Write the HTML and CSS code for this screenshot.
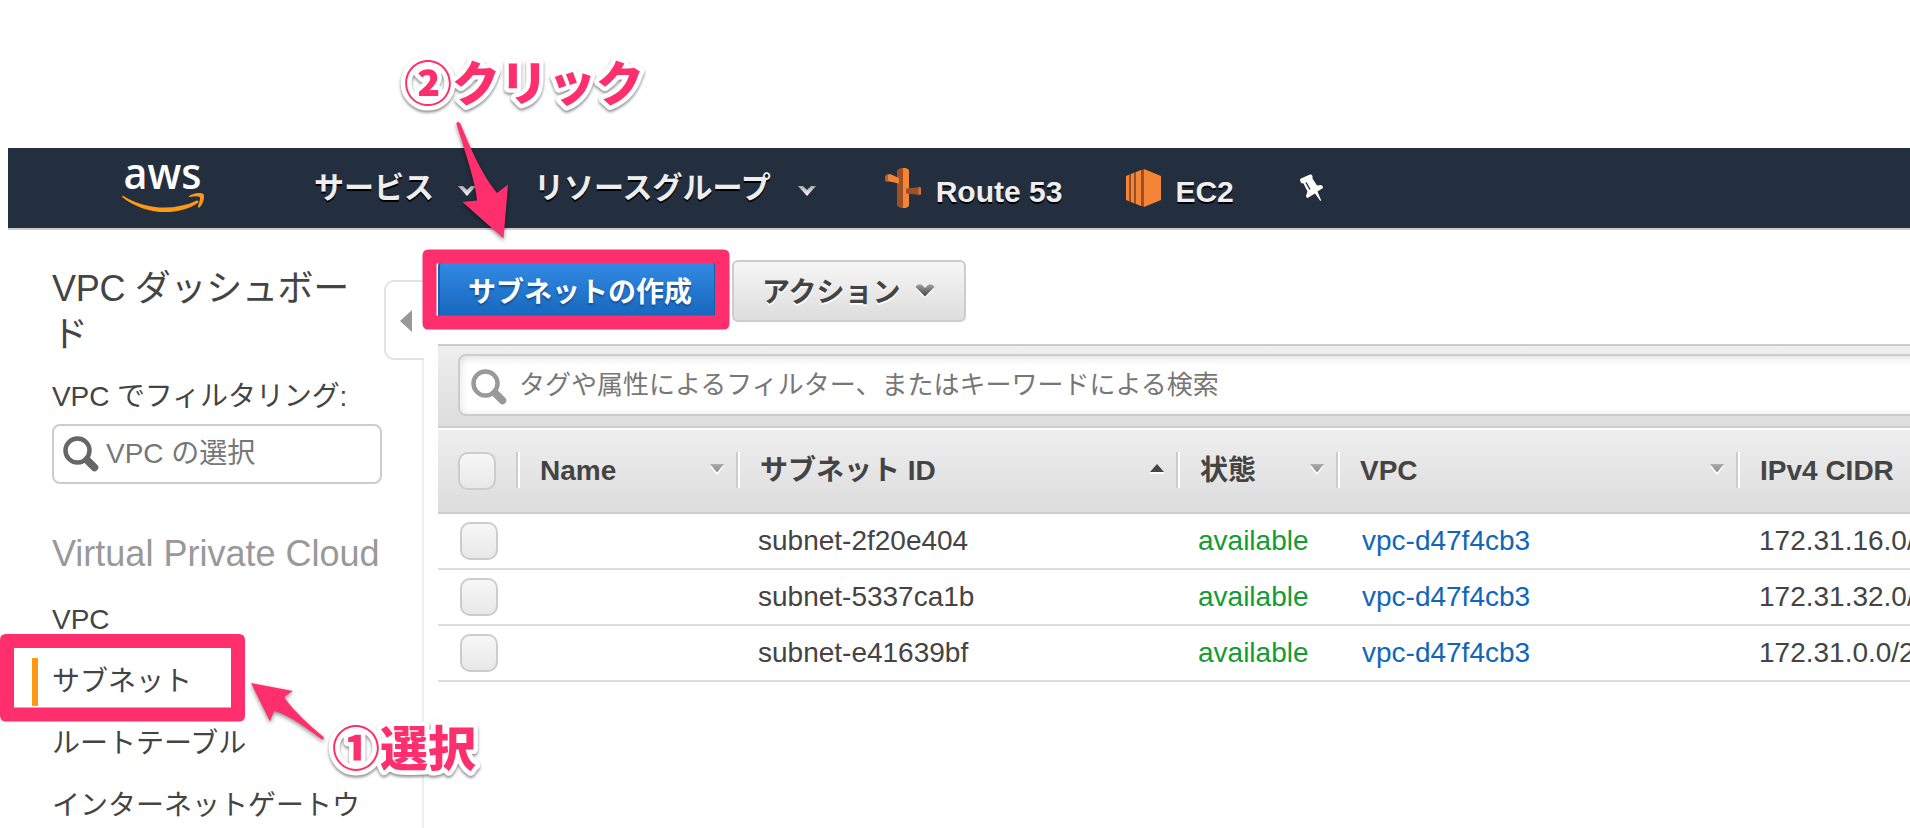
FILE: index.html
```html
<!DOCTYPE html>
<html lang="ja">
<head>
<meta charset="utf-8">
<title>VPC ダッシュボード</title>
<link rel="stylesheet" href="styles.css">
</head>
<body>
<svg class="defs" width="0" height="0">
  <defs>
    <linearGradient id="chev" x1="0" y1="0" x2="0" y2="1"><stop offset="0" stop-color="#a8a8a8"/><stop offset="1" stop-color="#fff"/></linearGradient>
    <linearGradient id="act" x1="0" y1="0" x2="0" y2="1"><stop offset="0" stop-color="#a0a0a0"/><stop offset="1" stop-color="#444"/></linearGradient>
    <linearGradient id="sort" x1="0" y1="0" x2="0" y2="1"><stop offset="0" stop-color="#adadad"/><stop offset="1" stop-color="#8a8a8a"/></linearGradient>
    <symbol id="down" viewBox="0 0 16 12"><path d="M1 2h14L8 11z" fill="#fff"/><path d="M1 0h14L8 8.500z" fill="url(#sort)"/></symbol>
    <symbol id="glass" viewBox="0 0 36 36"><circle cx="14.500" cy="14.500" r="12" fill="#fff" stroke="currentColor" stroke-width="4.500"/><path d="M24 24l7.500 7.500" stroke="currentColor" stroke-width="7.500" stroke-linecap="round"/></symbol>
  </defs>
</svg>
<header class="topbar">
  <svg class="logo" width="84" height="52" viewBox="0 0 84 52">
    <text class="logo-text" x="1.500" y="28" textLength="78" lengthAdjust="spacingAndGlyphs">aws</text>
    <path d="M.5 34.500C22 48 50 51 75 39.500q2.500 .5 1 2.500C56 55 24 55 0 36z" fill="#ff9914"/>
    <path d="M66.500 35.500c4-3.600 12-4.500 15-2.500 1.500 3.500-.5 10-4 13.500q-2.200 .5-1.500-1.500c1.500-4 2.500-7.500 1.800-9.100-2.300-1.300-6-.5-10.300 0z" fill="#ff9914"/>
  </svg>
  <nav class="menu">
    <span class="menu-item services">サービス<svg class="chev" width="20" height="12" viewBox="0 0 20 12"><path d="M1 1h5l4 4 4-4h5l-9 10z" fill="url(#chev)"/></svg></span>
    <span class="menu-item groups">リソースグループ<svg class="chev" width="20" height="12" viewBox="0 0 20 12"><path d="M1 1h5l4 4 4-4h5l-9 10z" fill="url(#chev)"/></svg></span>
    <span class="menu-item route"><svg width="36" height="40" viewBox="0 0 36 40">
      <path d="M12 2l4-2h2v40h-2l-4-2z" fill="#9d5025"/><path d="M18 0h3l3 2v36l-3 2h-3z" fill="#f58536"/>
      <path d="M1 7l4-1 9 4v5.500L2 13z" fill="#f58536"/><path d="M0 8l3-2v8l-3-1z" fill="#b55f2b"/><path d="M21 20.500l15-1.500v8l-15-1.500z" fill="#9d5025"/><path d="M33.500 19l2.500 1v6l-2.500 1z" fill="#d27233"/>
    </svg><span class="latin">Route 53</span></span>
    <span class="menu-item ec2"><svg width="35" height="38" viewBox="0 0 35 38">
      <path d="M18 0l17 7v24l-17 7z" fill="#f58536"/><path d="M12 2.500L18 0v38l-6-2.500z" fill="#9d5025"/>
      <path d="M0 7l4-1.500v27L0 31zM5 5l3.500-1.500v31L5 33zM10 3l5-2v36l-5-2z" fill="#f58536"/><path d="M3 6l2-1v28l-2-1zM8 4l2-1v32l-2-1z" fill="#9d5025"/>
    </svg><span class="latin">EC2</span></span>
    <svg class="pin" width="26" height="29" viewBox="0 0 26 29"><path d="M1 6Q.5 5 2 4.500L11 .5q2-.5 2.500 1.500L13.500 4.500l4.500 7 4-.5q2.500 1 2 3l-5.500 3.500 3.500 8.500q0 1.500-1 .5l-5-7L8.500 24q-1.500-.5-1.500-2l1.500-4.500L4.500 9.500 2 9z" fill="#fff"/><path d="M7 8.500l4 7" stroke="#232f3e" stroke-width="1.400"/></svg>
  </nav>
</header>
<div class="page">
  <aside class="sidebar">
    <h1 class="title">VPC ダッシュボード</h1>
    <div class="filter-label">VPC でフィルタリング:</div>
    <div class="filter"><svg class="glass dark" width="36" height="36"><use href="#glass"/></svg>VPC の選択</div>
    <h2 class="group">Virtual Private Cloud</h2>
    <ul class="links">
      <li>VPC</li><li class="active">サブネット</li><li>ルートテーブル</li><li>インターネットゲートウ</li>
    </ul>
  </aside>
  <div class="rail"><div class="tab"><svg width="12" height="22" viewBox="0 0 12 22"><path d="M12 0v22L0 11z" fill="#999"/></svg></div><div class="rule"></div></div>
  <main class="main">
    <div class="actions">
      <button class="btn primary">サブネットの作成</button>
      <button class="btn plain">アクション<svg class="act-chev" width="20" height="14" viewBox="0 0 20 14"><path d="M.5 4.500l3-2.500h3l3.500 3.500L13.500 2h3l3 2.500L10 14z" fill="#fff"/><path d="M.5 3L3 .5h3.500L10 4 13.500 .5H17L19.500 3 10 12.500z" fill="url(#act)"/></svg></button>
    </div>
    <div class="searchbar"><div class="search"><svg class="glass" width="36" height="36"><use href="#glass"/></svg>タグや属性によるフィルター、またはキーワードによる検索</div></div>
    <div class="grid head">
      <div class="cell check"><i class="box"></i></div>
      <div class="cell"><span>Name</span><svg class="sort" width="16" height="12"><use href="#down"/></svg></div>
      <div class="cell"><span>サブネット ID</span><svg class="sort" width="16" height="12" viewBox="0 0 16 12"><path d="M1 8h14v2H1z" fill="#fff"/><path d="M8 0l7 8H1z" fill="#444"/></svg></div>
      <div class="cell"><span>状態</span><svg class="sort" width="16" height="12"><use href="#down"/></svg></div>
      <div class="cell"><span>VPC</span><svg class="sort" width="16" height="12"><use href="#down"/></svg></div>
      <div class="cell"><span>IPv4 CIDR</span></div>
    </div>
    <div class="grid row"><div class="check"><i class="box"></i></div><div></div><div class="id">subnet-2f20e404</div><div class="state">available</div><div class="vpc">vpc-d47f4cb3</div><div class="cidr">172.31.16.0/</div></div>
    <div class="grid row"><div class="check"><i class="box"></i></div><div></div><div class="id">subnet-5337ca1b</div><div class="state">available</div><div class="vpc">vpc-d47f4cb3</div><div class="cidr">172.31.32.0/</div></div>
    <div class="grid row"><div class="check"><i class="box"></i></div><div></div><div class="id">subnet-e41639bf</div><div class="state">available</div><div class="vpc">vpc-d47f4cb3</div><div class="cidr">172.31.0.0/2</div></div>
  </main>
</div>
<svg class="notes" width="1910" height="828" viewBox="0 0 1910 828">
  <g class="frames">
    <path fill-rule="evenodd" d="M428.500 249.500h295q6 0 6 6v68q0 6-6 6h-295q-6 0-6-6v-68q0-6 6-6zM436.500 263.500v52h278.500v-52z"/>
    <path fill-rule="evenodd" d="M6 634h233q6 0 6 6v75.500q0 6-6 6H6q-6 0-6-6V640q0-6 6-6zM14 648v59.500h217V648z"/>
  </g>
  <g class="arrows">
    <path d="M456.500 124Q456 122 458 122Q459.500 122 460.500 124C468 142 480 172 497 193L508 184.500L503.500 238.500L462.500 202L477 200.500C476 182 462 143 456.500 124Z"/>
    <path d="M251 683L293 691L284 697C294 712 312 727 323.500 737Q324.500 740 322 739.500C310 731 290 715 274 711L270 721.500Z"/>
  </g>
  <g class="labels">
    <text x="404" y="101">②クリック</text>
    <text x="332" y="766">①選択</text>
  </g>
</svg>
</body>
</html>
```
FILE: styles.css
```css
* { box-sizing: border-box; }
body {
  margin: 0; width: 1910px; height: 828px; overflow: hidden; background: #fff; color: #444;
  font-family: "Liberation Sans", "Noto Sans CJK JP", sans-serif; font-size: 28px; line-height: 40px;
}
svg { display: block; flex: none; }
.defs { position: absolute; }
.topbar { display: flex; margin: 148px 0 0 8px; height: 82px; background: #232f3e; border-bottom: 2px solid #ccc; }
.logo { margin: 13px 0 0 114px; overflow: visible; }
.logo-text { font: 600 44px "Open Sans", sans-serif; fill: #fff; }
.menu { display: flex; align-items: center; height: 80px; margin-left: 108px; color: #eee; font-size: 30px; font-weight: bold; white-space: nowrap; text-shadow: 0 2px 0 #000; }
.menu-item { display: flex; align-items: center; }
.chev { margin: 5px 0 0 23px; }
.groups { margin-left: 57px; }
.groups .chev { margin-left: 26px; }
.route { margin-left: 68px; gap: 15px; }
.ec2 { margin-left: 64px; gap: 14px; }
.latin { padding-top: 7px; }
.pin { margin: 0 0 0 65px; }

.page { display: flex; height: 598px; }
.sidebar { width: 384px; flex: none; padding: 36px 0 0 52px; overflow: hidden; }
.title { margin: 0; font-size: 36px; line-height: 46px; font-weight: normal; width: 310px; word-break: break-all; letter-spacing: -.3px; }
.filter-label { margin-top: 19px; height: 48px; line-height: 40px; white-space: nowrap; letter-spacing: -.1px; }
.filter { display: flex; align-items: center; width: 330px; height: 60px; margin-top: -1px; padding-left: 9px; gap: 7px; border: 2px solid #ccc; border-radius: 8px; color: #777; }
.glass { color: #999; }
.dark { color: #666; }
.group { margin: 48px 0 0; font-size: 36px; line-height: 44px; font-weight: normal; color: #999; white-space: nowrap; }
.links { list-style: none; margin: 13px 0 0; padding: 0; white-space: nowrap; }
.links li { height: 62px; line-height: 62px; }
.active::before { content: ""; float: left; width: 6px; height: 48px; margin: 7px 0 0 -20px; background: #ff9914; }
.rail { width: 40px; flex: none; padding-top: 50px; display: flex; flex-direction: column; }
.tab { height: 80px; flex: none; border: 2px solid #e2e2e2; border-right: 0; border-radius: 10px 0 0 10px; padding: 28px 0 0 14px; }
.rule { flex: 1; border-right: 2px solid #eee; }
.main { width: 1472px; flex: none; margin-left: 14px; }
.actions { display: flex; gap: 16px; padding-top: 30px; height: 114px; }
.btn { display: flex; align-items: center; height: 62px; border-radius: 6px; padding: 0 0 2px 28px; font: bold 28px "Liberation Sans", "Noto Sans CJK JP", sans-serif; white-space: nowrap; }
.primary { width: 278px; color: #fff; border: 2px solid #1560b3; background: linear-gradient(#338ae2, #1565bb); text-shadow: 0 2px 2px #104f95; }
.plain { width: 234px; color: #444; border: 2px solid #ccc; background: linear-gradient(#f6f6f6, #ddd); text-shadow: 0 2px 0 #fff; }
.act-chev { margin: 1px 0 0 14px; }
.searchbar { height: 84px; border-top: 2px solid #ccc; border-bottom: 2px solid #ccc; background: linear-gradient(#eee, #ddd); padding: 8px 0 0 20px; overflow: hidden; }
.search { display: flex; align-items: center; width: 1480px; height: 62px; padding-left: 11px; gap: 12px; border: 2px solid #ccc; border-radius: 8px; background: #fff; box-shadow: inset 0 2px 8px #ddd; color: #777; font-size: 26px; }
.search .glass { margin-top: 3px; }
.grid { display: grid; grid-template-columns: 78px 220px 440px 160px 400px 174px; white-space: nowrap; }
.head { height: 86px; border-top: 2px solid #fff; border-bottom: 2px solid #ccc; background: linear-gradient(#eee, #ddd); font-weight: bold; padding-top: 22px; }
.cell { display: flex; align-items: center; justify-content: space-between; height: 36px; padding: 0 11px 0 22px; border-left: 2px solid #ccc; box-shadow: inset 2px 0 #fff; }
.cell span { padding-top: 2px; }
.cell.check { border: 0; box-shadow: none; padding: 0 0 0 20px; height: 38px; }
.box { display: block; width: 38px; height: 38px; border: 2px solid #ccc; border-radius: 10px; background: linear-gradient(#f7f7f7, #e8e8e8); }
.row { height: 56px; border-bottom: 2px solid #ddd; align-items: center; }
.row .check { padding-left: 22px; }
.row > .cidr { padding-left: 23px; }
.row > .id { padding-left: 22px; }
.row > .state { padding-left: 22px; color: #129c36; }
.row > .vpc { padding-left: 26px; color: #1166bb; }

.notes { position: absolute; left: 0; top: 0; }
.frames path { fill: #ff2e6c; }
.arrows { fill: #ff2e6c; filter: drop-shadow(0 2px 2px rgba(0,0,0,.45)); }
.labels { filter: drop-shadow(0 2px 1.500px rgba(0,0,0,.45)); }
.labels text { font: 900 48px "Noto Sans CJK JP", sans-serif; fill: #ff2e6c; stroke: #fff; stroke-width: 9px; stroke-linejoin: round; paint-order: stroke; }
```
